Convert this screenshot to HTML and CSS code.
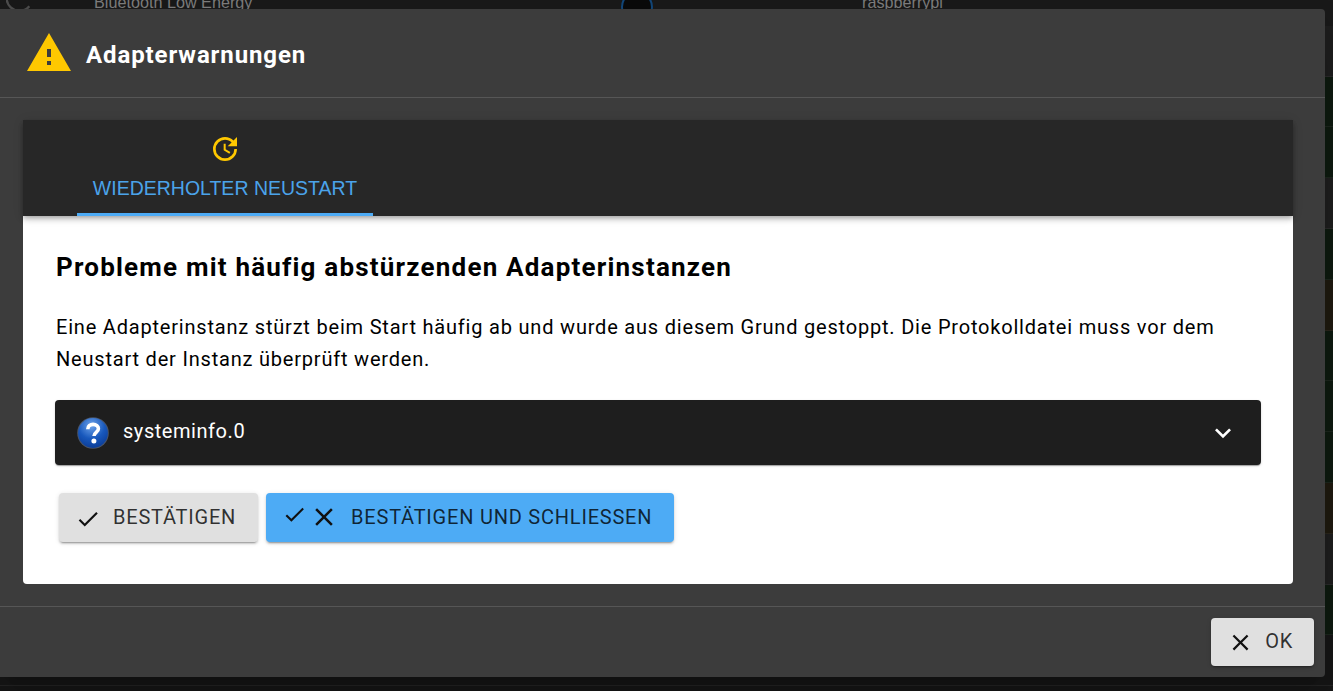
FILE: index.html
```html
<!DOCTYPE html>
<html lang="de">
<head>
<meta charset="utf-8">
<title>Adapterwarnungen</title>
<link rel="stylesheet" href="styles.css">
</head>
<body>
<div class="backdrop">
  <div class="bg-row bg-first">
    <svg class="bg-arc" viewBox="0 0 24 24"><path d="M20 5a11 11 0 1 0 0 14"/></svg>
    <span class="bg-left">Bluetooth Low Energy</span>
    <span class="bg-dot"></span>
    <span class="bg-host">raspberrypi</span>
  </div>
  <div class="bg-row"></div>
  <div class="bg-row bg-green"></div>
  <div class="bg-row bg-green"></div>
  <div class="bg-row"></div>
  <div class="bg-row bg-green"></div>
  <div class="bg-row bg-brown"></div>
  <div class="bg-row bg-green"></div>
  <div class="bg-row bg-green"></div>
  <div class="bg-row bg-green"></div>
  <div class="bg-row bg-brown"></div>
  <div class="bg-row"></div>
  <div class="bg-row bg-green"></div>
  <div class="bg-row bg-dark"></div>
  <div class="bg-row bg-rest"></div>
</div>

<div class="dialog">
  <header class="dialog-title">
    <svg class="warn-icon" viewBox="0 0 24 24"><path d="M1 21h22L12 2 1 21zm12-3h-2v-2h2v2zm0-4h-2v-4h2v4z"/></svg>
    <h2>Adapterwarnungen</h2>
  </header>
  <div class="dialog-content">
    <div class="card">
      <div class="tabs">
        <div class="tab">
          <svg class="tab-icon" viewBox="0 0 24 24"><path d="M11 8v5l4.25 2.52.77-1.28-3.52-2.09V8H11zm10 2V3l-2.64 2.64C16.74 4.01 14.49 3 12 3a9 9 0 1 0 9 9h-2a7 7 0 1 1-7-7c1.93 0 3.68.79 4.95 2.05L14 10h7z"/></svg>
          <span>Wiederholter Neustart</span>
        </div>
      </div>
      <div class="panel">
        <h3>Probleme mit häufig abstürzenden Adapterinstanzen</h3>
        <p>Eine Adapterinstanz stürzt beim Start häufig ab und wurde aus diesem Grund gestoppt. Die Protokolldatei muss vor dem Neustart der Instanz überprüft werden.</p>
        <div class="accordion">
          <svg class="help-icon" viewBox="0 0 32 32">
            <defs>
              <radialGradient id="ball" cx="45%" cy="25%" r="80%">
                <stop offset="0" stop-color="#6fa4ea"/>
                <stop offset=".55" stop-color="#1858bc"/>
                <stop offset="1" stop-color="#0a3a94"/>
              </radialGradient>
            </defs>
            <circle cx="16" cy="16" r="15.8" fill="#4a5568"/>
            <circle cx="16" cy="16" r="14.9" fill="url(#ball)"/>
            <path class="help-mark" d="M10.8 12.2c0-3 2.3-4.8 5.3-4.8 3.1 0 5.3 1.8 5.3 4.3 0 3.7-4.4 3.7-4.4 7.3"/>
            <circle cx="16.9" cy="24" r="2.5" fill="#fff"/>
          </svg>
          <span class="accordion-name">systeminfo.0</span>
          <svg class="chevron" viewBox="0 0 24 24"><path d="M7.41 8.59 12 13.17l4.59-4.58L18 10l-6 6-6-6 1.41-1.41z"/></svg>
        </div>
        <div class="actions">
          <button class="btn btn-grey" type="button">
            <svg class="icon icon-check-low" viewBox="0 0 24 24"><path d="M9 16.17 4.83 12l-1.42 1.41L9 19 21 7l-1.41-1.41z"/></svg>
            <span class="btn-label">Bestätigen</span>
          </button>
          <button class="btn btn-blue" type="button">
            <svg class="icon icon-check-high" viewBox="0 0 24 24"><path d="M9 16.17 4.83 12l-1.42 1.41L9 19 21 7l-1.41-1.41z"/></svg>
            <svg class="icon icon-close-big" viewBox="0 0 24 24"><path d="M19 6.41 17.59 5 12 10.59 6.41 5 5 6.41 10.59 12 5 17.59 6.41 19 12 13.41 17.59 19 19 17.59 13.41 12z"/></svg>
            <span class="btn-label">Bestätigen und schließen</span>
          </button>
        </div>
      </div>
    </div>
  </div>
  <footer class="dialog-footer">
    <button class="btn btn-grey btn-ok" type="button">
      <svg class="icon icon-close" viewBox="0 0 24 24"><path d="M19 6.41 17.59 5 12 10.59 6.41 5 5 6.41 10.59 12 5 17.59 6.41 19 12 13.41 17.59 19 19 17.59 13.41 12z"/></svg>
      <span class="btn-label btn-label-ok">Ok</span>
    </button>
  </footer>
</div>
</body>
</html>
```

FILE: styles.css
```css
* { box-sizing: border-box; }

html, body {
  margin: 0;
  height: 691px;
  overflow: hidden;
  background: #161616;
  font-family: Roboto, "Liberation Sans", sans-serif;
}

.backdrop {
  display: flex;
  flex-direction: column;
  height: 716px;
  margin-top: -25px;
  overflow: hidden;
}

.bg-row {
  flex: none;
  height: 50.8px;
  background: #1e1e1e;
  border-bottom: 1px solid #2a2a2a;
}

.bg-first {
  position: relative;
  background: #191919;
  border-bottom: 0;
  color: #7c7c7c;
  font-family: "Liberation Sans", sans-serif;
  font-size: 16.2px;
}

.bg-green { background: #0e1a10; border-bottom-color: #1c261d; }
.bg-brown { background: #1f1a10; border-bottom-color: #2a261c; }
.bg-dark { background: #161616; border-bottom-color: #242424; }
.bg-rest { flex: 1; height: auto; min-height: 0; background: #161616; border-bottom: 0; }

.bg-arc {
  position: absolute;
  left: 6px;
  top: 9px;
  width: 28px;
  height: 28px;
  fill: none;
  stroke: #4c4c4c;
  stroke-width: 2;
}

.bg-left { position: absolute; left: 94px; top: 18px; }
.bg-host { position: absolute; left: 862px; top: 18px; }

.bg-dot {
  position: absolute;
  left: 621px;
  top: 16px;
  width: 32px;
  height: 32px;
  border-radius: 50%;
  background: #0a0a0a;
  border: 2px solid #124678;
}

.dialog {
  position: absolute;
  left: 0;
  top: 9px;
  width: 1325px;
  height: 668px;
  display: flex;
  flex-direction: column;
  background: #3c3c3c;
  border-radius: 0 4px 4px 0;
  box-shadow: 0 11px 15px -7px rgba(0,0,0,.2), 0 24px 38px 3px rgba(0,0,0,.14);
  color: #fff;
}

.dialog-title {
  flex: none;
  height: 89px;
  display: flex;
  align-items: center;
  gap: 13px;
  padding-left: 25px;
  border-bottom: 1px solid #565656;
}

.warn-icon { width: 48px; height: 48px; fill: #ffc800; }

.dialog-title h2 {
  margin: 3px 0 0;
  font-size: 24px;
  font-weight: 700;
  line-height: 32px;
  letter-spacing: .9px;
}

.dialog-content {
  flex: 1;
  min-height: 0;
  padding: 22px 32px 22px 23px;
  border-bottom: 1px solid #565656;
}

.card {
  height: 100%;
  display: flex;
  flex-direction: column;
  background: #fff;
  border-radius: 0 0 4px 4px;
}

.tabs {
  flex: none;
  position: relative;
  height: 96px;
  padding-left: 54px;
  background: #272727;
  box-shadow: 0 2px 4px -1px rgba(0,0,0,.2), 0 4px 5px rgba(0,0,0,.14), 0 1px 10px rgba(0,0,0,.12);
}

.tab {
  width: 296px;
  height: 96px;
  display: flex;
  flex-direction: column;
  align-items: center;
  padding-top: 13px;
  border-bottom: 3px solid #4dabf5;
  color: #4ba3ea;
  font-family: "Liberation Sans", sans-serif;
  font-size: 19.5px;
  text-transform: uppercase;
}

.tab span { line-height: 22px; margin-top: 12px; }

.tab-icon { width: 32px; height: 32px; fill: #ffc800; flex: none; }

.panel {
  flex: 1;
  padding: 34px 32px 0;
  color: #000;
}

.panel h3 {
  margin: 0 0 0 1px;
  font-size: 26px;
  font-weight: 700;
  line-height: 34px;
  letter-spacing: 1.2px;
}

.panel p {
  margin: 27px 0 0 1px;
  font-size: 20px;
  line-height: 32px;
  letter-spacing: .8px;
}

.accordion {
  height: 65px;
  margin-top: 25px;
  display: flex;
  align-items: center;
  padding: 0 22px;
  background: #1e1e1e;
  border-radius: 4px;
  box-shadow: 0 2px 1px -1px rgba(0,0,0,.2), 0 1px 1px rgba(0,0,0,.14), 0 1px 3px rgba(0,0,0,.12);
  color: #fff;
}

.help-icon { width: 32px; height: 32px; flex: none; }
.help-mark { fill: none; stroke: #fff; stroke-width: 3.6; }

.accordion-name {
  flex: 1;
  margin-left: 14px;
  padding-bottom: 3px;
  font-size: 20px;
  letter-spacing: .55px;
}

.chevron { width: 32px; height: 32px; fill: #fff; flex: none; }

.actions {
  display: flex;
  gap: 8px;
  margin-top: 28px;
  padding-left: 4px;
}

.btn {
  display: inline-flex;
  align-items: center;
  height: 49px;
  padding: 0 22px 0 16px;
  border: 0;
  border-radius: 4px;
  font-family: Roboto, "Liberation Sans", sans-serif;
  font-size: 20px;
  font-weight: 400;
  letter-spacing: .78px;
  text-transform: uppercase;
  color: rgba(0,0,0,.8);
  box-shadow: 0 3px 1px -2px rgba(0,0,0,.2), 0 2px 2px rgba(0,0,0,.14), 0 1px 5px rgba(0,0,0,.12);
}

.btn-grey { background: #e0e0e0; }
.btn-blue { background: #4dabf5; }

.icon { flex: none; fill: #111; }
.icon-check-low { position: relative; top: 1px; width: 26px; height: 26px; }
.icon-check-high { position: relative; top: -3px; width: 25px; height: 25px; }
.icon-close-big { position: relative; top: -1px; width: 30px; height: 30px; margin-left: 2px; }
.icon-close { width: 27px; height: 27px; }

.btn-label { margin-left: 12px; padding-bottom: 2px; }
.btn-label-ok { margin-left: 11px; }

.dialog-footer {
  flex: none;
  height: 70px;
  display: flex;
  justify-content: flex-end;
  align-items: flex-start;
  padding: 11px 11px 0 0;
}

.btn-ok { height: 48px; padding-right: 21px; }
```
